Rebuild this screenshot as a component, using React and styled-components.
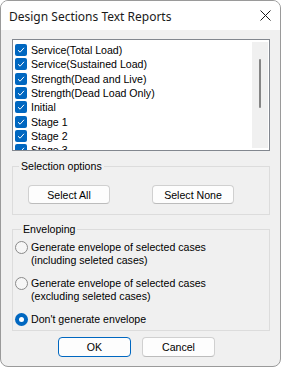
import React from 'react'
import styled, { createGlobalStyle } from 'styled-components'

const GlobalStyle = createGlobalStyle`
  html, body {
    margin: 0;
    padding: 0;
    background: #ffffff;
  }
  * {
    box-sizing: border-box;
  }
`

const Window = styled.div`
  width: 281px;
  height: 367px;
  border: 1px solid #9a9a9a;
  border-radius: 8px;
  overflow: hidden;
  background: #f0f0f0;
  display: flex;
  flex-direction: column;
  font-family: 'Liberation Sans', Arial, sans-serif;
  font-size: 10.6px;
  color: #000;
`

const TitleBar = styled.div`
  height: 29px;
  background: #ffffff;
  display: flex;
  align-items: center;
  justify-content: space-between;
  padding: 0 9px 0 8px;
  flex-shrink: 0;
`

const Title = styled.span`
  font-family: 'Noto Sans', 'Open Sans', sans-serif;
  font-size: 12px;
  color: #1a1a1a;
  margin-top: 1px;
`

const Body = styled.div`
  flex: 1;
  padding: 9px 10px 0 11px;
  display: flex;
  flex-direction: column;
`

const ListBox = styled.div`
  height: 112px;
  border: 1px solid #82878f;
  background: #ffffff;
  display: flex;
  overflow: hidden;
`

const Items = styled.div`
  flex: 1;
  padding: 3px 0 0 2px;
  overflow: hidden;
`

const Item = styled.div`
  height: 14.33px;
  display: flex;
  align-items: center;
  gap: 4px;
  white-space: nowrap;
`

const Check = styled.span`
  width: 12px;
  height: 12px;
  border-radius: 2px;
  background: #0067c0;
  display: flex;
  align-items: center;
  justify-content: center;
  flex-shrink: 0;
`

const ScrollTrack = styled.div`
  width: 16px;
  margin: 2px 1px 2px 0;
  background: #f0f0f0;
  display: flex;
  justify-content: center;
  padding-top: 17px;
`

const Thumb = styled.div`
  width: 2px;
  height: 49px;
  background: #858585;
  border-radius: 1px;
`

const Group = styled.fieldset`
  margin: ${props => props.$top}px 0 0 0;
  padding: ${props => props.$pad};
  border: 1px solid #dcdcdc;
  border-radius: 0;
  min-width: 0;
`

const Legend = styled.legend`
  padding: 0 2px;
  margin-left: 6px;
  line-height: 12px;
`

const ButtonRow = styled.div`
  display: flex;
  gap: ${props => props.$gap}px;
  padding-left: ${props => props.$left}px;
`

const Button = styled.button`
  width: ${props => props.$w}px;
  height: ${props => props.$h}px;
  font-family: 'Liberation Sans', Arial, sans-serif;
  font-size: 10.6px;
  color: #000;
  background: #fdfdfd;
  border: 1px solid ${props => (props.$primary ? '#0067c0' : '#d0d0d0')};
  border-bottom-color: ${props => (props.$primary ? '#0067c0' : '#bcbcbc')};
  border-radius: 4px;
  padding: 0;
`

const Radios = styled.div`
  display: flex;
  flex-direction: column;
  gap: 10px;
`

const RadioRow = styled.label`
  display: flex;
  align-items: flex-start;
  gap: 3px;
  line-height: 13px;
`

const RadioDot = styled.span`
  width: 13px;
  height: 13px;
  border-radius: 50%;
  flex-shrink: 0;
  border: ${props => (props.$on ? 'none' : '1px solid #8a8a8a')};
  background: ${props => (props.$on ? '#0067c0' : '#f6f6f6')};
  display: flex;
  align-items: center;
  justify-content: center;

  &::after {
    content: '';
    display: ${props => (props.$on ? 'block' : 'none')};
    width: 5px;
    height: 5px;
    border-radius: 50%;
    background: #ffffff;
  }
`

const Footer = styled.div`
  display: flex;
  gap: 11px;
  padding-left: 46px;
  margin-top: 6px;
`

const cases = [
  'Service(Total Load)',
  'Service(Sustained Load)',
  'Strength(Dead and Live)',
  'Strength(Dead Load Only)',
  'Initial',
  'Stage 1',
  'Stage 2',
  'Stage 3',
]

const CheckMark = () => (
  <svg width="8" height="8" viewBox="0 0 8 8">
    <path d="M1 4.2 L3.1 6.2 L7 1.8" fill="none" stroke="#fff" strokeWidth="1" />
  </svg>
)

const CloseIcon = () => (
  <svg width="11" height="11" viewBox="0 0 11 11">
    <path d="M0.5 0.5 L10.5 10.5 M10.5 0.5 L0.5 10.5" stroke="#1a1a1a" strokeWidth="1" />
  </svg>
)

const App = () => (
  <>
    <GlobalStyle />
    <Window>
      <TitleBar>
        <Title>Design Sections Text Reports</Title>
        <CloseIcon />
      </TitleBar>
      <Body>
        <ListBox>
          <Items>
            {cases.map(c => (
              <Item key={c}>
                <Check>
                  <CheckMark />
                </Check>
                {c}
              </Item>
            ))}
          </Items>
          <ScrollTrack>
            <Thumb />
          </ScrollTrack>
        </ListBox>

        <Group $top={9} $pad="13px 0 10px 0">
          <Legend>Selection options</Legend>
          <ButtonRow $gap={42} $left={15}>
            <Button $w={82} $h={19}>Select All</Button>
            <Button $w={82} $h={19}>Select None</Button>
          </ButtonRow>
        </Group>

        <Group $top={8} $pad="6px 0 4px 2px">
          <Legend>Enveloping</Legend>
          <Radios>
            <RadioRow>
              <RadioDot />
              <span>
                Generate envelope of selected cases
                <br />
                (including seleted cases)
              </span>
            </RadioRow>
            <RadioRow>
              <RadioDot />
              <span>
                Generate envelope of selected cases
                <br />
                (excluding seleted cases)
              </span>
            </RadioRow>
            <RadioRow>
              <RadioDot $on />
              <span>Don't generate envelope</span>
            </RadioRow>
          </Radios>
        </Group>

        <Footer>
          <Button $w={73} $h={20} $primary>OK</Button>
          <Button $w={73} $h={20}>Cancel</Button>
        </Footer>
      </Body>
    </Window>
  </>
)

export default App
